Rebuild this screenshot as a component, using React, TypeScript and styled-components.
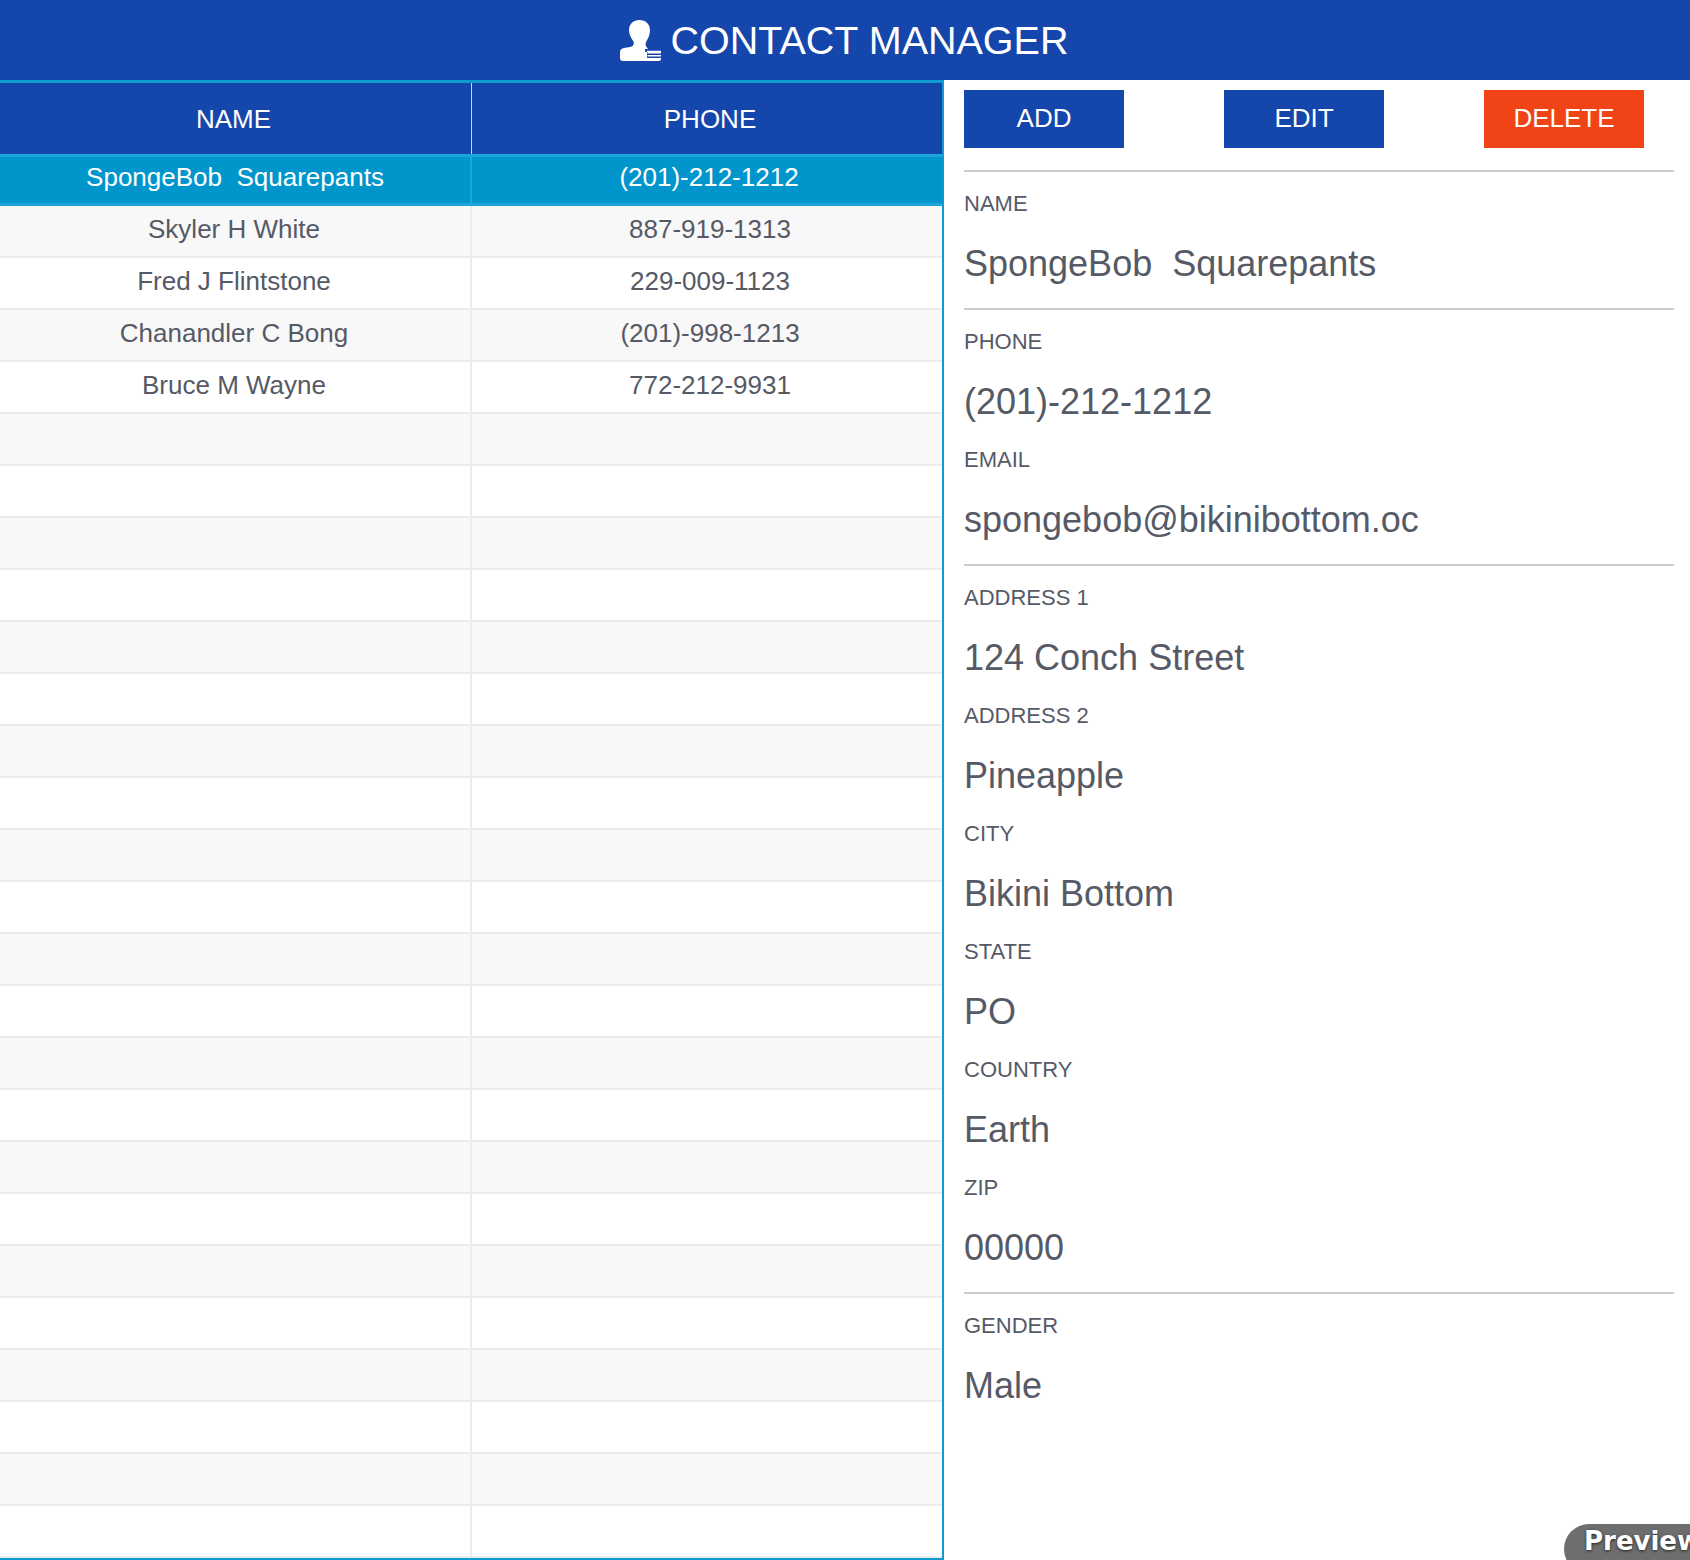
import React from "react";
import styled, { createGlobalStyle } from "styled-components";

const Global = createGlobalStyle`
  html, body { margin: 0; padding: 0; background: #fff; }
  body { font-family: "Liberation Sans", Arial, sans-serif; color: #555a66; }
  * { box-sizing: border-box; }
`;

const Page = styled.div`
  position: relative;
  width: 1690px;
  height: 1560px;
  overflow: hidden;
`;

const TopBar = styled.header`
  height: 80px;
  padding-right: 2px;
  background: #1546ab;
  color: #fff;
  display: flex;
  align-items: center;
  justify-content: center;
  gap: 10px;
`;

const Title = styled.h1`
  margin: 0;
  font-size: 39.5px;
  font-weight: 400;
  line-height: 80px;
`;

const Main = styled.main`
  display: flex;
  height: 1480px;
`;

const ListPanel = styled.section`
  width: 944px;
  flex: none;
  border-top: 3px solid #0f9bd0;
  border-right: 2px solid #0f9bd0;
  border-bottom: 2px solid #0f9bd0;
`;

const Grid = styled.div`
  display: grid;
  grid-template-columns: 472px 470px;
`;

const HeadCell = styled.div<{ $last?: boolean }>`
  height: 71px;
  padding: 1px ${(p) => (p.$last ? "0" : "4px")} 0 ${(p) => (p.$last ? "6px" : "0")};
  background: #1546ab;
  color: #fff;
  font-size: 26px;
  display: flex;
  align-items: center;
  justify-content: center;
  border-right: ${(p) => (p.$last ? "none" : "1px solid #c9d4ec")};
`;

const Cell = styled.div<{ $odd: boolean; $last?: boolean; $selected?: boolean }>`
  height: 52px;
  padding: 0 ${(p) => (p.$last || p.$selected ? "0" : "2px")}
    ${(p) => (p.$selected ? "6px" : "4px")}
    ${(p) => (p.$last ? (p.$selected ? "4px" : "6px") : "0")};
  background: ${(p) => (p.$selected ? "#0096cc" : p.$odd ? "#f8f8f8" : "#fff")};
  color: ${(p) => (p.$selected ? "#fff" : "#555a66")};
  font-size: 26px;
  white-space: pre;
  display: flex;
  align-items: center;
  justify-content: center;
  border-top: ${(p) => (p.$selected ? "3px solid #1ba5d8" : "none")};
  border-bottom: ${(p) =>
    p.$selected ? "3px solid #1ba5d8" : "2px solid #ececec"};
  border-right: ${(p) =>
    p.$last ? "none" : p.$selected ? "2px solid #1ba5d8" : "2px solid #ececec"};
`;

const DetailPanel = styled.section`
  flex: 1;
  padding-left: 20px;
  padding-right: 16px;
`;

const Toolbar = styled.div`
  height: 92px;
  padding: 10px 30px 0 0;
  display: flex;
  justify-content: space-between;
  align-items: flex-start;
  border-bottom: 2px solid #ccc;
`;

const ActionButton = styled.button<{ $danger?: boolean }>`
  width: 160px;
  height: 58px;
  border: none;
  padding: 0 0 2px;
  background: ${(p) => (p.$danger ? "#f04416" : "#1546ab")};
  color: #fff;
  font-family: inherit;
  font-size: 26px;
`;

const Section = styled.div<{ $plain?: boolean }>`
  padding-bottom: 18px;
  border-bottom: ${(p) => (p.$plain ? "none" : "2px solid #ccc")};
`;

const Field = styled.div`
  height: 118px;
  padding-top: 20px;
`;

const Label = styled.div`
  font-size: 22px;
  line-height: 24px;
  height: 24px;
`;

const Value = styled.div`
  margin-top: 27px;
  font-size: 36px;
  line-height: 42px;
  white-space: pre;
`;

const PreviewBadge = styled.div`
  position: absolute;
  left: 1564px;
  top: 1524px;
  width: 160px;
  height: 50px;
  padding: 2px 0 0 20px;
  border-radius: 25px;
  background: #6e6e6e;
  color: #fff;
  font-family: "DejaVu Sans", sans-serif;
  font-weight: 700;
  font-size: 26px;
  line-height: 30px;
  text-shadow: 0 1px 3px #222;
  white-space: nowrap;
`;

const UserIcon = () => (
  <svg width="41" height="41" viewBox="0 0 41 41" aria-hidden="true">
    <path
      fill="#fff"
      d="M19.5 0C25.5 0 30 4 30 10c0 4-1.5 8-3.5 11-1.3 2-1.3 5 .5 6.5l1 1.5H41v10c0 1-1 2-2 2H3c-2 0-3-1-3-3v-6c0-2 1.5-3.5 4-4l6-1c3-.5 4.500-2.500 3.500-5.500C11 18 9 14 9 10 9 4 13.500 0 19.500 0z"
    />
    <path fill="#1546ab" d="M25 29h16v1.800H27V38h14v-1.500H27.500V35H41v-1.500H27.500v-1.500H25z" />
  </svg>
);

const rows: [string, string][] = [
  ["Skyler H White", "887-919-1313"],
  ["Fred J Flintstone", "229-009-1123"],
  ["Chanandler C Bong", "(201)-998-1213"],
  ["Bruce M Wayne", "772-212-9931"],
];
const blank: [string, string][] = Array.from({ length: 22 }, () => ["", ""]);

const sections: [string, string][][] = [
  [["NAME", "SpongeBob  Squarepants"]],
  [
    ["PHONE", "(201)-212-1212"],
    ["EMAIL", "spongebob@bikinibottom.oc"],
  ],
  [
    ["ADDRESS 1", "124 Conch Street"],
    ["ADDRESS 2", "Pineapple"],
    ["CITY", "Bikini Bottom"],
    ["STATE", "PO"],
    ["COUNTRY", "Earth"],
    ["ZIP", "00000"],
  ],
  [["GENDER", "Male"]],
];

export default function App() {
  return (
    <Page>
      <Global />
      <TopBar>
        <UserIcon />
        <Title>CONTACT MANAGER</Title>
      </TopBar>
      <Main>
        <ListPanel>
          <Grid>
            <HeadCell>NAME</HeadCell>
            <HeadCell $last>PHONE</HeadCell>
            <Cell $odd={false} $selected>SpongeBob  Squarepants</Cell>
            <Cell $odd={false} $selected $last>(201)-212-1212</Cell>
            {[...rows, ...blank].map(([name, phone], i) => (
              <React.Fragment key={i}>
                <Cell $odd={i % 2 === 0}>{name}</Cell>
                <Cell $odd={i % 2 === 0} $last>{phone}</Cell>
              </React.Fragment>
            ))}
          </Grid>
        </ListPanel>
        <DetailPanel>
          <Toolbar>
            <ActionButton>ADD</ActionButton>
            <ActionButton>EDIT</ActionButton>
            <ActionButton $danger>DELETE</ActionButton>
          </Toolbar>
          {sections.map((fields, i) => (
            <Section key={i} $plain={i === sections.length - 1}>
              {fields.map(([label, value]) => (
                <Field key={label}>
                  <Label>{label}</Label>
                  <Value>{value}</Value>
                </Field>
              ))}
            </Section>
          ))}
        </DetailPanel>
      </Main>
      <PreviewBadge>Preview</PreviewBadge>
    </Page>
  );
}
